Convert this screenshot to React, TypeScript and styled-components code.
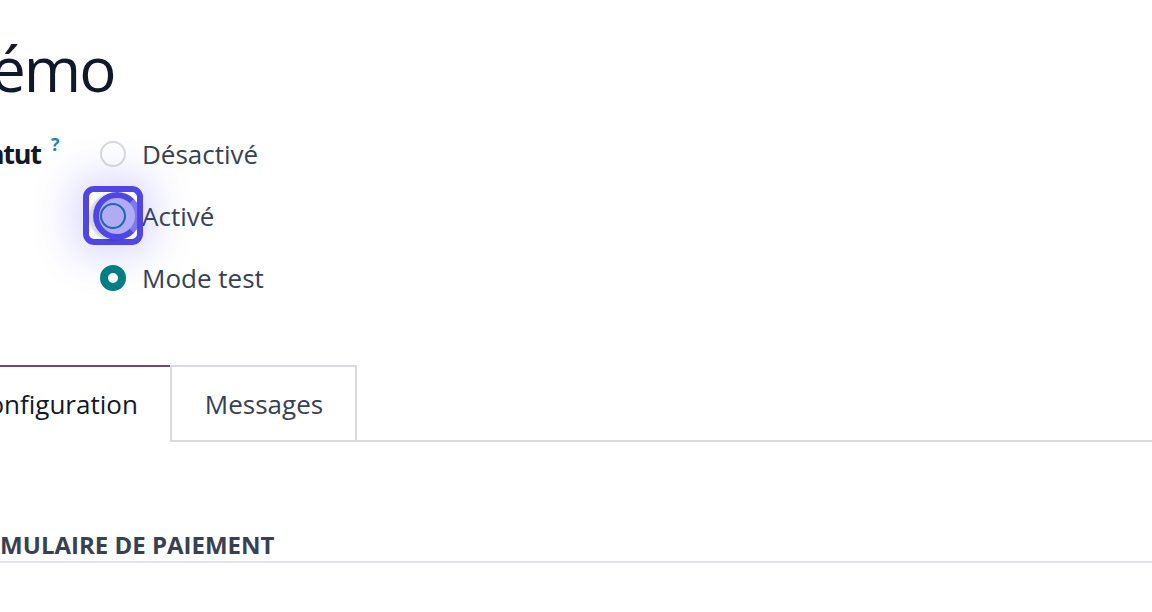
import React from "react";
import styled, { createGlobalStyle } from "styled-components";

const GlobalStyle = createGlobalStyle`
  html, body {
    margin: 0;
    padding: 0;
    background: #ffffff;
    overflow: hidden;
  }
  body {
    font-family: "Open Sans", "Noto Sans", sans-serif;
    color: #374151;
  }
`;

const Viewport = styled.div`
  width: 1152px;
  height: 612px;
  overflow: hidden;
`;

const Sheet = styled.div`
  margin-left: -48px;
  width: 1260px;
`;

const Title = styled.h1`
  margin: 28px 0 0 -4px;
  font-size: 62px;
  line-height: 80px;
  letter-spacing: -2px;
  font-weight: 400;
  color: #111827;
`;

const FieldRow = styled.div`
  display: grid;
  grid-template-columns: 148px 1fr;
  margin-top: 15px;
`;

const Label = styled.div`
  display: flex;
  align-items: flex-start;
  height: 62px;
  padding-left: 12px;
  line-height: 62px;
  font-size: 27px;
  letter-spacing: -1.2px;
  font-weight: 700;
  color: #111827;
`;

const Help = styled.sup`
  font-size: 18px;
  line-height: 1;
  font-weight: 700;
  letter-spacing: 0;
  color: #1a86a8;
  margin-left: 10px;
  margin-top: 12px;
`;

const Options = styled.div`
  display: flex;
  flex-direction: column;
`;

const Option = styled.label`
  display: flex;
  align-items: center;
  gap: 16px;
  height: 62px;
  font-size: 26px;
  color: #374151;
`;

const RadioWrap = styled.span`
  position: relative;
  display: inline-flex;
  width: 26px;
  height: 26px;
`;

const Radio = styled.span<{ $checked?: boolean; $focused?: boolean }>`
  box-sizing: border-box;
  width: 26px;
  height: 26px;
  border-radius: 50%;
  background: #ffffff;
  border: ${(p) =>
    p.$checked ? "8px solid #017e84" : p.$focused ? "2px solid #017e84" : "2px solid #d8dadd"};
`;

const FocusBox = styled.span`
  position: absolute;
  left: -17px;
  top: -17px;
  box-sizing: border-box;
  width: 60px;
  height: 59px;
  border: 6px solid #4f46e5;
  border-radius: 11px;
  box-shadow: 0 0 38px 14px rgba(99, 91, 255, 0.2);
  pointer-events: none;
`;

const FocusDot = styled.span`
  position: absolute;
  left: -7px;
  top: -11px;
  box-sizing: border-box;
  width: 48px;
  height: 48px;
  border-radius: 50%;
  border: 6px solid #4f46e5;
  border-right-color: rgba(79, 70, 229, 0.5);
  background: rgba(79, 70, 229, 0.45);
  box-shadow: -4px 1px 2px rgba(0, 0, 0, 0.15);
  pointer-events: none;
`;

const Tabs = styled.div`
  display: flex;
  margin: 56px 0 0 -13px;
  border-bottom: 2px solid #d8dadd;
`;

const Tab = styled.div<{ $active?: boolean }>`
  box-sizing: border-box;
  height: 77px;
  margin-bottom: -2px;
  padding: 0 32px 0 33px;
  display: flex;
  align-items: center;
  font-size: 26px;
  background: #ffffff;
  color: ${(p) => (p.$active ? "#111827" : "#374151")};
  border-top: 2px solid ${(p) => (p.$active ? "#714b67" : "#d8dadd")};
  border-left: ${(p) => (p.$active ? "none" : "2px solid #d8dadd")};
  border-right: ${(p) => (p.$active ? "none" : "2px solid #d8dadd")};
  border-bottom: ${(p) => (p.$active ? "2px solid #ffffff" : "2px solid #d8dadd")};
`;

const SectionTitle = styled.div`
  margin-top: 87px;
  font-size: 24px;
  line-height: 32px;
  font-weight: 700;
  text-transform: uppercase;
  color: #374151;
  border-bottom: 2px solid #e3e4e8;
`;

const options = [
  { label: "Désactivé", checked: false, focused: false },
  { label: "Activé", checked: false, focused: true },
  { label: "Mode test", checked: true, focused: false },
];

export default function App() {
  return (
    <Viewport>
      <GlobalStyle />
      <Sheet>
        <Title>Démo</Title>
        <FieldRow>
          <Label>
            Statut<Help>?</Help>
          </Label>
          <Options>
            {options.map((o) => (
              <Option key={o.label}>
                <RadioWrap>
                  <Radio $checked={o.checked} $focused={o.focused} />
                  {o.focused && (
                    <>
                      <FocusBox />
                      <FocusDot />
                    </>
                  )}
                </RadioWrap>
                {o.label}
              </Option>
            ))}
          </Options>
        </FieldRow>
        <Tabs>
          <Tab $active>Configuration</Tab>
          <Tab>Messages</Tab>
        </Tabs>
        <SectionTitle>Formulaire de paiement</SectionTitle>
      </Sheet>
    </Viewport>
  );
}
